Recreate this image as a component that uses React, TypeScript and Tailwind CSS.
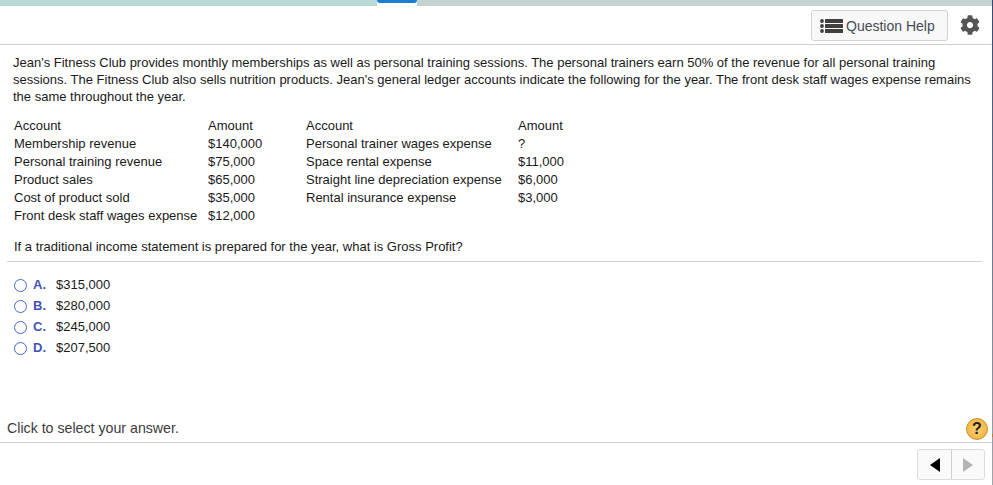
import { FaCog } from 'react-icons/fa'

const rowsLeft = [
  ['Account', 'Amount'],
  ['Membership revenue', '$140,000'],
  ['Personal training revenue', '$75,000'],
  ['Product sales', '$65,000'],
  ['Cost of product sold', '$35,000'],
  ['Front desk staff wages expense', '$12,000'],
]

const rowsRight = [
  ['Account', 'Amount'],
  ['Personal trainer wages expense', '?'],
  ['Space rental expense', '$11,000'],
  ['Straight line depreciation expense', '$6,000'],
  ['Rental insurance expense', '$3,000'],
  ['', ''],
]

const answers = [
  ['A.', '$315,000'],
  ['B.', '$280,000'],
  ['C.', '$245,000'],
  ['D.', '$207,500'],
]

function ListIcon() {
  return (
    <svg width="23" height="14" viewBox="0 0 23 14" fill="#3f3f3f">
      <circle cx="2" cy="2" r="1.9" />
      <circle cx="2" cy="7" r="1.9" />
      <circle cx="2" cy="12" r="1.9" />
      <rect x="5" y="0" width="18" height="4" rx="0.5" />
      <rect x="5" y="5" width="18" height="4" rx="0.5" />
      <rect x="5" y="10" width="18" height="4" rx="0.5" />
    </svg>
  )
}

export default function App() {
  return (
    <div className="relative h-[485px] w-[993px] overflow-hidden bg-white font-['Liberation_Sans',Arial,sans-serif] text-[13px] text-[#1a1a1a]">
      <div className="flex h-[6px]">
        <div className="h-full w-[377px] bg-[#b9d9d4]" />
        <div className="h-[3px] w-[40px] rounded-b-sm bg-[#1a7fd0]" />
        <div className="h-full flex-1 bg-[#c3d3d2]" />
      </div>

      <div className="flex h-[39px] items-start border-b border-[#cfcfd6] pl-[811px] pt-[4px]">
        <button className="flex h-[31px] w-[137px] items-center gap-[3px] rounded-[3px] border border-[#d4d4d4] bg-[#f8f8f8] pl-[8px] pt-[1px] text-[14px] text-[#444b55]">
          <ListIcon />
          Question Help
        </button>
        <div className="ml-[12px] mt-[5px]">
          <FaCog size={20} color="#555555" />
        </div>
      </div>

      <p className="ml-[13px] mt-[9px] w-[965px] leading-[17px]">
        Jean's Fitness Club provides monthly memberships as well as personal training sessions. The personal trainers earn 50% of the revenue for all personal training sessions. The Fitness Club also sells nutrition products. Jean's general ledger accounts indicate the following for the year. The front desk staff wages expense remains the same throughout the year.
      </p>

      <div className="ml-[14px] mt-[12px] grid grid-cols-[194px_98px_212px_60px] leading-[18px]">
        {rowsLeft.map((row, i) => (
          <div key={i} className="contents">
            <div>{row[0]}</div>
            <div>{row[1]}</div>
            <div>{rowsRight[i][0]}</div>
            <div>{rowsRight[i][1]}</div>
          </div>
        ))}
      </div>

      <p className="ml-[14px] mt-[13px] leading-[18px]">If a traditional income statement is prepared for the year, what is Gross Profit?</p>

      <div className="ml-[7px] mr-[11px] mt-[5px] border-t border-[#d4d4d4]" />

      <div className="ml-[14px] mt-[14px] flex flex-col gap-[3px]">
        {answers.map(([letter, value]) => (
          <div key={letter} className="flex h-[18px] items-center">
            <span className="h-[13px] w-[13px] rounded-full border border-[#4a68c8] bg-white" />
            <span className="ml-[6px] w-[22px] font-bold text-[#4354b8]">{letter}</span>
            <span className="ml-[1px]">{value}</span>
          </div>
        ))}
      </div>

      <div className="mt-[60px] flex h-[26px] items-start justify-between border-b border-[#cfcfd6] pl-[7px] pr-[5px]">
        <span className="mt-[1px] text-[14.2px] leading-[20px] text-[#3c3c3c]">Click to select your answer.</span>
        <span className="mt-[1px] flex h-[22px] w-[22px] items-center justify-center rounded-full border border-[#c9962e] bg-radial from-[#fad27a] to-[#f0ad24] text-[16px] font-bold text-[#222222]">?</span>
      </div>

      <div className="ml-[917px] mt-[6px] flex h-[31px] w-[68px] rounded-[3px] border border-[#dcdcdc] bg-[#fafafa]">
        <div className="flex w-[34px] items-center justify-center border-r border-[#cfcfcf]">
          <svg width="10" height="14" viewBox="0 0 10 14"><path d="M10 0 V14 L0 7 Z" fill="#000000" /></svg>
        </div>
        <div className="flex flex-1 items-center justify-center">
          <svg width="10" height="14" viewBox="0 0 10 14"><path d="M0 0 V14 L10 7 Z" fill="#b4b4b4" /></svg>
        </div>
      </div>

      <div className="absolute right-0 top-0 h-full w-px bg-linear-to-b from-[#2f4a7a] to-[#a3a5aa]" />
      <div className="absolute right-0 top-[434px] h-[3px] w-px bg-[#c9741e]" />
    </div>
  )
}
